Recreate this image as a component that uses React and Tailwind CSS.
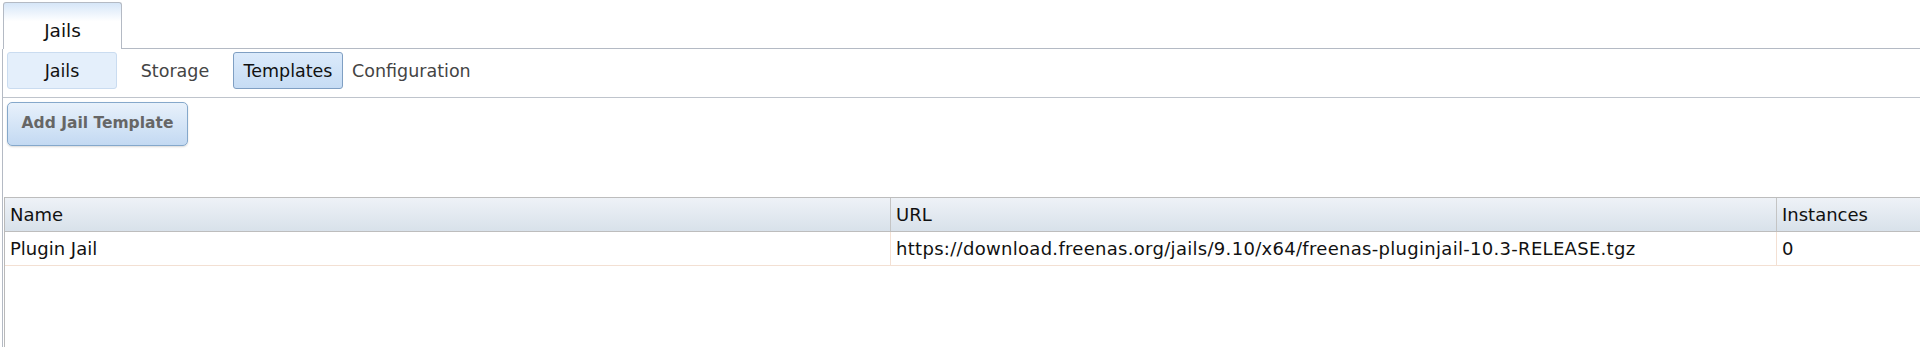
import React from "react";

const subTabs = [
  { label: "Jails", style: "w-[110px] bg-[#e4effb] border-[#cadcf0] text-[#111]" },
  { label: "Storage", style: "w-[110px] border-transparent text-[#444]" },
  { label: "Templates", style: "w-[110px] bg-gradient-to-b from-[#dbeafb] to-[#c6dcf4] border-[#7f9fc3] text-[#111]" },
  { label: "Configuration", style: "px-[5px] border-transparent text-[#444]" },
];

const rows = [
  {
    name: "Plugin Jail",
    url: "https://download.freenas.org/jails/9.10/x64/freenas-pluginjail-10.3-RELEASE.tgz",
    instances: "0",
  },
];

function App() {
  return (
    <div className="w-full h-[347px] bg-white overflow-hidden font-['DejaVu_Sans','Noto_Sans',sans-serif] text-[#111]">
      {/* top tab strip */}
      <div className="h-[49px] flex items-end pl-[3px] pt-[2px]">
        <div className="w-[119px] h-[47px] border border-b-0 border-[#b4bac4] rounded-t-[3px] bg-gradient-to-b from-[#d6e6f8] via-white via-40% to-white flex justify-center pt-[14px] text-[18.5px]">
          Jails
        </div>
        <div className="flex-1 h-full border-b border-[#b4bac4]" />
      </div>

      {/* pane */}
      <div className="ml-[2px] h-[298px] border-l border-[#b4bac4] flex flex-col">
        <div className="h-[49px] shrink-0 border-b border-[#bfc4cc] flex items-start gap-[3px] pl-[4px] pt-[3px]">
          {subTabs.map((t) => (
            <div
              key={t.label}
              className={`h-[37px] border rounded-[3px] flex items-center justify-center pt-[2px] text-[17.5px] ${t.style}`}
            >
              {t.label}
            </div>
          ))}
        </div>

        <div className="h-[99px] shrink-0 pl-[4px] pt-[4px]">
          <button className="w-[181px] h-[44px] rounded-[5px] border border-[#85a8cb] bg-gradient-to-b from-[#e8f1fb] to-[#c3d9f2] shadow-[0_1px_2px_rgba(0,0,0,0.15)] text-[15.5px] font-bold text-[#666]">
            Add Jail Template
          </button>
        </div>

        {/* grid */}
        <div className="flex-1 ml-[1px] border-l border-[#b9b9b9]">
          <div className="grid grid-cols-[886px_886px_1fr] h-[35px] border-t border-b border-[#bdbdbd] bg-gradient-to-b from-[#eef2f7] to-[#d8e1ea] text-[18px]">
            <div className="pl-[5px] flex items-center border-r border-[#c4c4c4]">Name</div>
            <div className="pl-[5px] flex items-center border-r border-[#c4c4c4]">URL</div>
            <div className="pl-[5px] flex items-center">Instances</div>
          </div>
          {rows.map((r) => (
            <div key={r.name} className="grid grid-cols-[886px_886px_1fr] h-[34px] border-b border-[#f3e0d3] text-[18px]">
              <div className="pl-[5px] flex items-center border-r border-[#f3e0d3]">{r.name}</div>
              <div className="pl-[5px] flex items-center border-r border-[#f3e0d3] tracking-[0.3px]">{r.url}</div>
              <div className="pl-[5px] flex items-center">{r.instances}</div>
            </div>
          ))}
        </div>
      </div>
    </div>
  );
}

export default App;
